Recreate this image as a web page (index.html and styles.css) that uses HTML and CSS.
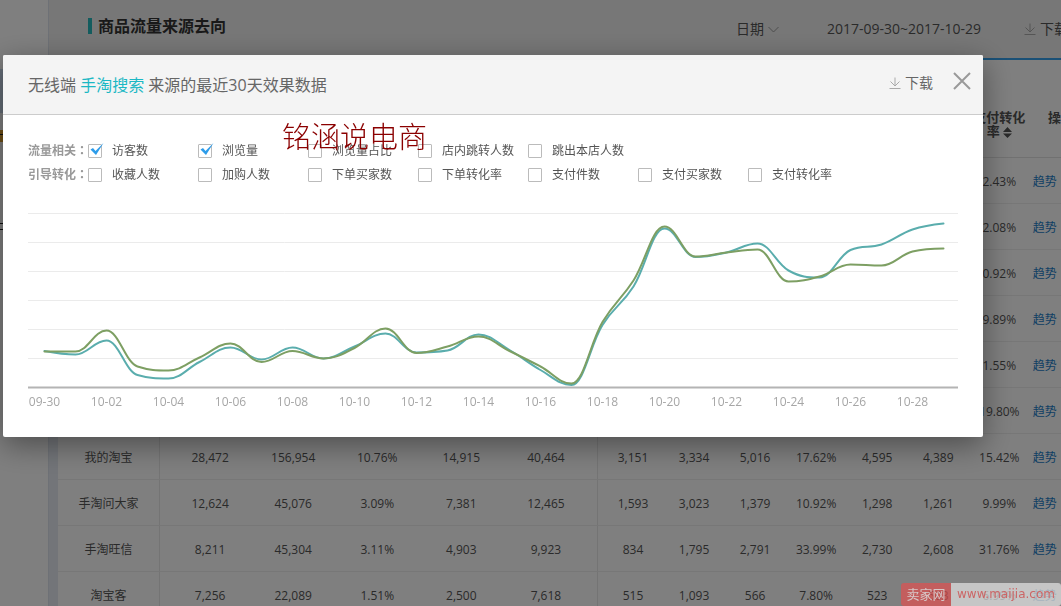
FILE: index.html
```html
<!DOCTYPE html>
<html lang="zh-CN">
<head>
<meta charset="utf-8">
<title>商品流量来源去向</title>
<link rel="stylesheet" href="styles.css">
</head>
<body>
<div class="page">
  <aside class="sidebar"><div class="sidebar-active"></div><div class="sidebar-badge"></div><div class="sidebar-mark"></div></aside>
  <main class="content">
    <header class="topbar">
      <h1 class="topbar-title">商品流量来源去向</h1>
      <div class="topbar-tools">
        <button class="tool date-button" type="button">日期
          <svg class="chevron" viewBox="0 0 11 7"><path d="M0.5 1 L5.5 6 L10.5 1"/></svg>
        </button>
        <span class="date-range">2017-09-30~2017-10-29</span>
        <button class="tool" type="button">
          <svg class="download-icon" viewBox="0 0 12 12"><path d="M6 0.5V8.5M1.5 4.5L6 9L10.5 4.5M0.5 11.5H11.5"/></svg>下载
        </button>
      </div>
    </header>
    <div class="panel">
      <table class="data">
        <colgroup>
          <col class="c-name"><col class="c-edge"><col class="c-wide"><col class="c-wide"><col class="c-wide"><col class="c-last">
          <col class="c-first"><col class="c-num"><col class="c-num"><col class="c-num"><col class="c-num"><col class="c-num"><col class="c-num"><col class="c-act">
        </colgroup>
        <thead>
          <tr><th class="name"></th><th colspan="5" class="group"></th><th colspan="6"></th>
            <th class="rate">支付转化<br>率<svg class="sort" viewBox="0 0 9 11"><path d="M0 5L4.5 0L9 5ZM0 6.5L4.5 11L9 6.5Z"/></svg></th><th>操作</th></tr>
        </thead>
        <tbody>
          <tr><td class="name"></td><td colspan="5" class="group"></td><td colspan="6"></td><td>2.43%</td><td class="act"><a href="#">趋势</a></td></tr>
          <tr><td class="name"></td><td colspan="5" class="group"></td><td colspan="6"></td><td>2.08%</td><td class="act"><a href="#">趋势</a></td></tr>
          <tr><td class="name"></td><td colspan="5" class="group"></td><td colspan="6"></td><td>0.92%</td><td class="act"><a href="#">趋势</a></td></tr>
          <tr><td class="name"></td><td colspan="5" class="group"></td><td colspan="6"></td><td>9.89%</td><td class="act"><a href="#">趋势</a></td></tr>
          <tr><td class="name"></td><td colspan="5" class="group"></td><td colspan="6"></td><td>1.55%</td><td class="act"><a href="#">趋势</a></td></tr>
          <tr><td class="name"></td><td colspan="5" class="group"></td><td colspan="6"></td><td>19.80%</td><td class="act"><a href="#">趋势</a></td></tr>
          <tr><td class="name">我的淘宝</td><td class="lead">28,472</td><td>156,954</td><td>10.76%</td><td>14,915</td><td class="group tail">40,464</td><td class="first">3,151</td><td>3,334</td><td>5,016</td><td>17.62%</td><td>4,595</td><td>4,389</td><td>15.42%</td><td class="act"><a href="#">趋势</a></td></tr>
          <tr><td class="name">手淘问大家</td><td class="lead">12,624</td><td>45,076</td><td>3.09%</td><td>7,381</td><td class="group tail">12,465</td><td class="first">1,593</td><td>3,023</td><td>1,379</td><td>10.92%</td><td>1,298</td><td>1,261</td><td>9.99%</td><td class="act"><a href="#">趋势</a></td></tr>
          <tr><td class="name">手淘旺信</td><td class="lead">8,211</td><td>45,304</td><td>3.11%</td><td>4,903</td><td class="group tail">9,923</td><td class="first">834</td><td>1,795</td><td>2,791</td><td>33.99%</td><td>2,730</td><td>2,608</td><td>31.76%</td><td class="act"><a href="#">趋势</a></td></tr>
          <tr><td class="name">淘宝客</td><td class="lead">7,256</td><td>22,089</td><td>1.51%</td><td>2,500</td><td class="group tail">7,618</td><td class="first">515</td><td>1,093</td><td>566</td><td>7.80%</td><td>523</td><td>503</td><td>6.99%</td><td class="act"><a href="#">趋势</a></td></tr>
        </tbody>
      </table>
    </div>
  </main>
</div>

<div class="overlay">
  <section class="modal" role="dialog" aria-labelledby="modal-title">
    <header class="modal-head">
      <h2 class="modal-title" id="modal-title">无线端 <em>手淘搜索</em> 来源的最近30天效果数据</h2>
      <button class="tool" type="button">
        <svg class="download-icon" viewBox="0 0 12 12"><path d="M6 0.5V8.5M1.5 4.5L6 9L10.5 4.5M0.5 11.5H11.5"/></svg>下载
      </button>
      <button class="close" type="button" aria-label="关闭"><svg viewBox="0 0 18 18"><path d="M1 1L17 17M17 1L1 17"/></svg></button>
    </header>
    <div class="modal-body">
      <div class="filters">
        <div class="filter-row">
          <span class="filter-name">流量相关<span class="colon" lang="zh-TW">：</span></span>
          <label class="option"><span class="box"><input type="checkbox" checked><svg class="tick" viewBox="0 0 14 13"><path d="M0.5 6.5L3 5L5.5 8L13.5 0L6 12Z"/></svg></span>访客数</label>
          <label class="option"><span class="box"><input type="checkbox" checked><svg class="tick" viewBox="0 0 14 13"><path d="M0.5 6.5L3 5L5.5 8L13.5 0L6 12Z"/></svg></span>浏览量</label>
          <label class="option"><span class="box"><input type="checkbox"></span>浏览量占比</label>
          <label class="option"><span class="box"><input type="checkbox"></span>店内跳转人数</label>
          <label class="option"><span class="box"><input type="checkbox"></span>跳出本店人数</label>
        </div>
        <div class="filter-row">
          <span class="filter-name">引导转化<span class="colon" lang="zh-TW">：</span></span>
          <label class="option"><span class="box"><input type="checkbox"></span>收藏人数</label>
          <label class="option"><span class="box"><input type="checkbox"></span>加购人数</label>
          <label class="option"><span class="box"><input type="checkbox"></span>下单买家数</label>
          <label class="option"><span class="box"><input type="checkbox"></span>下单转化率</label>
          <label class="option"><span class="box"><input type="checkbox"></span>支付件数</label>
          <label class="option"><span class="box"><input type="checkbox"></span>支付买家数</label>
          <label class="option"><span class="box"><input type="checkbox"></span>支付转化率</label>
        </div>
      </div>
      <svg class="chart" id="chart" viewBox="0 0 930 200"></svg>
    </div>
    <div class="author">铭涵说电商</div>
  </section>
</div>
<div class="sitemark"><span class="sitemark-name">卖家网</span><span class="sitemark-url">www.maijia.com</span></div>
<script src="chart.js"></script>
</body>
</html>
```

FILE: styles.css
```css
* { box-sizing: border-box; }
body {
  margin: 0;
  height: 100vh;
  overflow: hidden;
  background: #fff;
  color: #555;
  font: 12px/18px "Open Sans", "Noto Sans CJK SC", sans-serif;
}
button { border: 0; padding: 0; background: none; color: inherit; font: inherit; }
a { color: #1c80c8; text-decoration: none; }
svg { display: block; fill: none; }

.page { display: flex; height: 100%; overflow: hidden; }
.sidebar { flex: 0 0 48px; padding-top: 69px; background: #fff; }
.sidebar-active { height: 44px; background: #ccdcf0; }
.sidebar-badge { width: 3px; height: 12px; margin-top: 17px; background: linear-gradient(#222, #222) 0 4px / 3px 1px no-repeat, #e0a030; }
.sidebar-mark { width: 3px; height: 7px; margin-top: 81px; border: solid #222; border-width: 1px 0; }
.content { flex: 1; min-width: 0; background: #e6ebf3; border-left: 1px solid #dde3ec; }
.topbar {
  display: flex;
  justify-content: space-between;
  height: 58px;
  margin-right: -7px;
  padding-left: 39px;
  background: #efefef;
}
.topbar-title {
  align-self: flex-start;
  margin: 18px 0 0;
  padding-left: 6px;
  border-left: 4px solid #26b8bd;
  color: #333;
  font-size: 16px;
  line-height: 16px;
}
.topbar-tools { display: flex; align-items: flex-start; padding-top: 20px; font-size: 14px; }
.tool { display: flex; align-items: center; gap: 4px; font-size: 14px; line-height: 18px; }
.date-button { margin-right: 48px; }
.date-range { margin-right: 43px; }
.chevron { width: 11px; height: 7px; stroke: #999; }
.download-icon { width: 12px; height: 12px; stroke: #aaa; }

.panel { margin-left: 9px; border-top: 2px solid #34a0ec; background: #fff; overflow: hidden; }
.data { width: 1034px; table-layout: fixed; border-collapse: separate; border-spacing: 0; text-align: center; }
.c-name { width: 102px; }
.c-edge { width: 91px; }
.c-wide { width: 84px; }
.c-last { width: 95px; }
.c-first { width: 65px; }
.c-num { width: 61px; }
.c-act { width: 62px; }
.data th { height: 98px; padding: 50px 0 0; border-bottom: 1px solid #e3e3e3; font-size: 13px; line-height: 14px; vertical-align: top; }
.data td { height: 46px; padding: 2px 0 0; border-bottom: 1px solid #efefef; }
.data .name, .data .group { border-right: 1px solid #e9e9e9; }
.data .lead { padding-left: 9px; }
.data .tail { padding-right: 9px; }
.data .first { padding-left: 4px; }
.data .act { padding-left: 3px; text-align: left; }
.sort { display: inline-block; width: 9px; height: 11px; margin-left: 3px; fill: #555; vertical-align: -2px; }

.overlay { position: fixed; inset: 0; padding: 55px 78px 0 3px; background: rgba(0, 0, 0, 0.5); }
.modal { position: relative; border-radius: 2px; background: #fff; box-shadow: 0 8px 30px rgba(0, 0, 0, 0.4); }
.modal-head {
  display: flex;
  align-items: center;
  height: 60px;
  padding: 0 12px 4px 25px;
  border-bottom: 1px solid #ccc;
  border-radius: 2px 2px 0 0;
  background: #f4f4f4;
  color: #666;
}
.modal-title { flex: 1; margin: 0; padding-top: 4px; font-size: 16px; font-weight: 400; line-height: 24px; }
.modal-title em { color: #1cb8c4; font-style: normal; }
.close { margin: 0 0 4px 20px; }
.close svg { width: 18px; height: 18px; stroke: #999; stroke-width: 2; }

.modal-body { padding: 24px; padding-left: 25px; padding-right: 25px; }
.filter-row { display: flex; align-items: center; height: 24px; }
.filter-name { flex: 0 0 60px; padding-bottom: 2px; color: #999; font-weight: 700; white-space: nowrap; }
.colon { font-family: "Noto Sans CJK TC", sans-serif; }
.option { display: flex; align-items: center; gap: 10px; flex: 0 0 110px; white-space: nowrap; }
.box { position: relative; width: 14px; height: 14px; }
.box input { display: block; width: 14px; height: 14px; margin: 0; border: 1px solid #bbb; border-radius: 1px; appearance: none; background: #fff; }
.tick { position: absolute; left: 2px; top: -1px; width: 14px; height: 13px; fill: #2d9cea; }

.chart { width: 100%; margin-top: 26px; }
.grid { stroke: #ebebeb; }
.axis { stroke: #b4b4b4; stroke-width: 2; }
.visitors, .views { stroke-width: 2; stroke-linecap: round; }
.visitors { stroke: #5aadad; }
.views { stroke: #7d9f63; }
.tick-label { fill: #a6a6a6; font-size: 12px; text-anchor: middle; }

.author { position: absolute; left: 279px; top: 62px; color: #8b0000; font: 300 29px/36px "Noto Sans CJK SC", sans-serif; }

.sitemark { position: fixed; right: 0; bottom: 0; display: flex; height: 23px; font-size: 13px; line-height: 23px; text-align: center; }
.sitemark-name { width: 50px; border-radius: 3px 0 0 3px; background: rgba(224, 80, 80, 0.7); color: #d8c8c8; }
.sitemark-url { width: 110px; border-radius: 0 3px 3px 0; background: rgba(228, 228, 228, 0.7); color: #cc6666; font-family: "DejaVu Sans", sans-serif; font-size: 12px; }
```

FILE: chart.js
```js
const STEP = 31;
const START = 16.5;
const visitors = [138, 141.5, 127.5, 162, 165.5, 149, 134.5, 146.5, 134.5, 145.5, 133.5, 120.5, 139.5, 137.5, 121.5, 137, 157, 172, 112, 73.5, 15.5, 44, 39.5, 30.5, 57.5, 64.5, 37, 31.5, 16.5, 10.5];
const views = [138.5, 138.5, 117.5, 153.5, 157.5, 144.5, 130.5, 149, 138, 145.5, 135, 115.5, 140, 133.5, 123.5, 138, 153.5, 170.5, 109, 67.5, 13.5, 43.5, 39.5, 36.5, 68.5, 63.5, 51.5, 52.5, 38.5, 35.5];
const chart = document.getElementById('chart');

function add(name, attrs, text) {
  const node = document.createElementNS('http://www.w3.org/2000/svg', name);
  Object.entries(attrs).forEach(([key, value]) => node.setAttribute(key, value));
  if (text) node.textContent = text;
  chart.appendChild(node);
}

// Smooth curve whose control points never overshoot the neighbouring values.
function spline(values) {
  const points = values.map((y, i) => ({ x: START + i * STEP, y }));
  let out = { x: points[0].x, y: points[0].y };
  let path = `M${out.x} ${out.y}`;
  for (let i = 1; i < points.length; i++) {
    const prev = points[i - 1], p = points[i], next = points[i + 1];
    let lx = p.x, ly = p.y, rx = p.x, ry = p.y;
    if (next) {
      lx = (1.5 * p.x + prev.x) / 2.5;
      ly = (1.5 * p.y + prev.y) / 2.5;
      rx = (1.5 * p.x + next.x) / 2.5;
      ry = (1.5 * p.y + next.y) / 2.5;
      const shift = (ry - ly) * (rx - p.x) / (rx - lx) + p.y - ry;
      ly += shift;
      ry += shift;
      const lLow = Math.min(prev.y, p.y), lHigh = Math.max(prev.y, p.y);
      if (ly > lHigh || ly < lLow) { ly = ly > lHigh ? lHigh : lLow; ry = 2 * p.y - ly; }
      const rLow = Math.min(next.y, p.y), rHigh = Math.max(next.y, p.y);
      if (ry > rHigh || ry < rLow) { ry = ry > rHigh ? rHigh : rLow; ly = 2 * p.y - ry; }
    }
    path += `C${out.x} ${out.y} ${lx} ${ly} ${p.x} ${p.y}`;
    out = { x: rx, y: ry };
  }
  return path;
}

for (let i = 0; i < 6; i++) {
  add('path', { class: 'grid', d: `M0 ${0.5 + i * 29}H930` });
}
add('path', { class: 'axis', d: 'M0 174.5H930' });
add('path', { class: 'visitors', d: spline(visitors) });
add('path', { class: 'views', d: spline(views) });

const day = new Date(2017, 8, 30);
for (let i = 0; i < 30; i += 2) {
  const label = String(day.getMonth() + 1).padStart(2, '0') + '-' + String(day.getDate()).padStart(2, '0');
  add('text', { class: 'tick-label', x: START + i * STEP, y: 193 }, label);
  day.setDate(day.getDate() + 2);
}
```
